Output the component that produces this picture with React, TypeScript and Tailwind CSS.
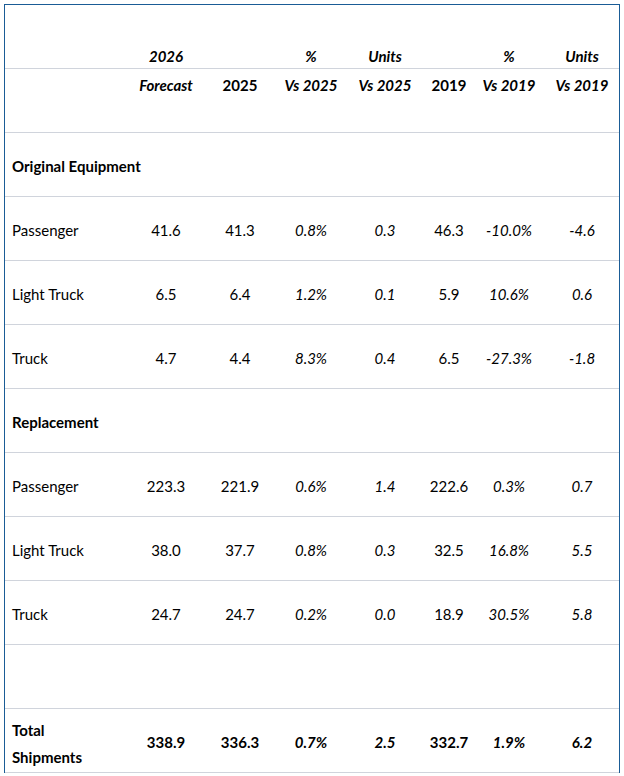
import React from "react";

type Row = {
  label: string;
  vals: string[];
};

const cols = "grid grid-cols-[124px_74px_74px_68px_80px_48px_72px_74px]";
const italicIdx = [2, 3, 5, 6];

const oe: Row[] = [
  { label: "Passenger", vals: ["41.6", "41.3", "0.8%", "0.3", "46.3", "-10.0%", "-4.6"] },
  { label: "Light Truck", vals: ["6.5", "6.4", "1.2%", "0.1", "5.9", "10.6%", "0.6"] },
  { label: "Truck", vals: ["4.7", "4.4", "8.3%", "0.4", "6.5", "-27.3%", "-1.8"] },
];

const rep: Row[] = [
  { label: "Passenger", vals: ["223.3", "221.9", "0.6%", "1.4", "222.6", "0.3%", "0.7"] },
  { label: "Light Truck", vals: ["38.0", "37.7", "0.8%", "0.3", "32.5", "16.8%", "5.5"] },
  { label: "Truck", vals: ["24.7", "24.7", "0.2%", "0.0", "18.9", "30.5%", "5.8"] },
];

const rowBase = `${cols} h-[64px] border-b border-[#d0d4dc]`;

function DataRow({ r }: { r: Row }) {
  return (
    <div className={rowBase}>
      <div className="flex items-center pl-[7px] pt-[2px]">{r.label}</div>
      {r.vals.map((v, i) => (
        <div
          key={i}
          className={`flex items-center justify-center pt-[2px] ${italicIdx.includes(i) ? "italic" : ""}`}
        >
          {v}
        </div>
      ))}
    </div>
  );
}

function SectionRow({ label }: { label: string }) {
  return (
    <div className={rowBase}>
      <div className="col-span-8 flex items-center pl-[7px] pt-[2px] font-bold">{label}</div>
    </div>
  );
}

export default function App() {
  const h1 = ["2026", "", "%", "Units", "", "%", "Units"];
  const h2 = ["Forecast", "2025", "Vs 2025", "Vs 2025", "2019", "Vs 2019", "Vs 2019"];
  const h2Italic = [true, false, true, true, false, true, true];
  const totals = ["338.9", "336.3", "0.7%", "2.5", "332.7", "1.9%", "6.2"];
  return (
    <div
      className="w-[624px] h-[776px] bg-white pt-[4px] pl-[4px] text-[15px] text-black leading-[20px]"
      style={{ fontFamily: "Lato, 'Open Sans', sans-serif" }}
    >
      <div className="w-[616px] border-t border-l border-r border-[#1a5c96]">
        <div className={rowBase}>
          <div />
          {h1.map((v, i) => (
            <div key={i} className="flex items-end justify-center pb-[2px] font-bold italic">
              {v}
            </div>
          ))}
        </div>
        <div className={rowBase}>
          <div />
          {h2.map((v, i) => (
            <div
              key={i}
              className={`flex items-start justify-center pt-[6px] font-bold ${h2Italic[i] ? "italic" : ""}`}
            >
              {v}
            </div>
          ))}
        </div>
        <SectionRow label="Original Equipment" />
        {oe.map((r, i) => (
          <DataRow key={"o" + i} r={r} />
        ))}
        <SectionRow label="Replacement" />
        {rep.map((r, i) => (
          <DataRow key={"r" + i} r={r} />
        ))}
        <div className={rowBase} />
        <div className={`${rowBase} font-bold`}>
          <div className="flex flex-col justify-center pl-[7px] pt-[6px] leading-[27px]">
            <span>Total</span>
            <span>Shipments</span>
          </div>
          {totals.map((v, i) => (
            <div
              key={i}
              className={`flex items-center justify-center pt-[3px] ${italicIdx.includes(i) ? "italic" : ""}`}
            >
              {v}
            </div>
          ))}
        </div>
      </div>
    </div>
  );
}
